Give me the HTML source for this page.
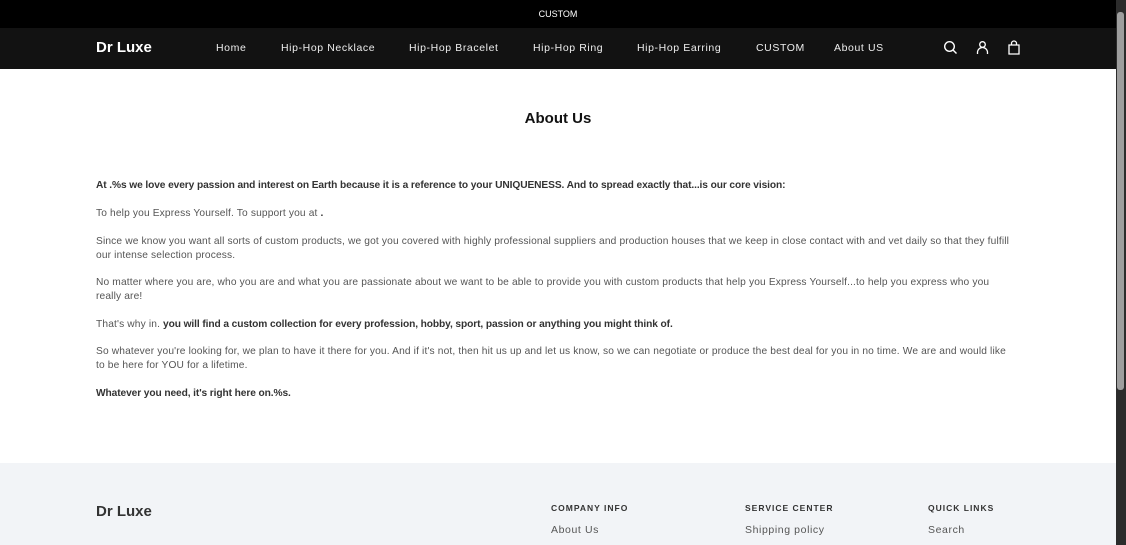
<!DOCTYPE html>
<html><head><meta charset="utf-8"><style>
*{margin:0;padding:0;box-sizing:border-box}
body{width:1126px;height:545px;overflow:hidden;font-family:"Liberation Sans",sans-serif;background:#fff;position:relative}
.sb{position:absolute;right:0;top:0;width:10px;height:545px;background:#2c2c2c}
.sb i{position:absolute;left:1px;top:12px;width:7px;height:378px;background:#9e9e9e;border-radius:3px}
.top{position:absolute;left:0;top:0;width:1116px;height:28px;background:#000;color:#fff;font-size:9px;text-align:center;line-height:28px}
.nav{position:absolute;left:0;top:28px;width:1116px;height:41px;background:#121212;color:#fff}
.logo{position:absolute;left:96px;top:11px;font-size:15px;font-weight:bold}
.nav a{position:absolute;top:14px;font-size:10.5px;letter-spacing:.6px;color:#eee}
.ic{position:absolute;top:12px}
h1{position:absolute;top:110px;width:1116px;text-align:center;font-size:15px;font-weight:bold;color:#111}
.c{position:absolute;left:96px;width:920px;font-size:10.2px;color:#555;line-height:14px;letter-spacing:.15px}
.c b{color:#333;letter-spacing:-.1px}
.foot{position:absolute;left:0;top:463px;width:1116px;height:82px;background:#f2f4f7}
.fl{position:absolute;left:96px;top:40px;font-size:15px;font-weight:bold;color:#333}
.fh{position:absolute;top:40px;font-size:8.5px;font-weight:bold;letter-spacing:1px;color:#333}
.fa{position:absolute;top:61px;font-size:10.5px;letter-spacing:.6px;color:#555}
</style></head><body>
<div class="top">CUSTOM</div>
<div class="nav">
<div class="logo">Dr Luxe</div>
<a style="left:216px">Home</a>
<a style="left:281px">Hip-Hop Necklace</a>
<a style="left:409px">Hip-Hop Bracelet</a>
<a style="left:533px">Hip-Hop Ring</a>
<a style="left:637px">Hip-Hop Earring</a>
<a style="left:756px">CUSTOM</a>
<a style="left:834px">About US</a>
<svg class="ic" style="left:943px" width="15" height="15" viewBox="0 0 15 15" fill="none" stroke="#fff" stroke-width="1.4"><circle cx="6.5" cy="6.5" r="4.8"/><path d="M10 10l3.5 3.5"/></svg>
<svg class="ic" style="left:975px" width="15" height="15" viewBox="0 0 15 15" fill="none" stroke="#fff" stroke-width="1.3"><circle cx="7.5" cy="4.5" r="2.8"/><path d="M2.5 14v-1.5a5 5 0 0 1 10 0V14"/></svg>
<svg class="ic" style="left:1007px" width="14" height="15" viewBox="0 0 14 15" fill="none" stroke="#fff" stroke-width="1.3"><path d="M2 5h10v9H2z"/><path d="M4.5 5V3.5a2.5 2.5 0 0 1 5 0V5"/></svg>
</div>
<h1>About Us</h1>
<div class="c" style="top:179px"><b>At .%s we love every passion and interest on Earth because it is a reference to your UNIQUENESS. And to spread exactly that...is our core vision:</b></div>
<div class="c" style="top:207px">To help you Express Yourself. To support you at <b>.</b></div>
<div class="c" style="top:235px">Since we know you want all sorts of custom products, we got you covered with highly professional suppliers and production houses that we keep in close contact with and vet daily so that they fulfill our intense selection process.</div>
<div class="c" style="top:276px">No matter where you are, who you are and what you are passionate about we want to be able to provide you with custom products that help you Express Yourself...to help you express who you really are!</div>
<div class="c" style="top:318px">That's why in. <b>you will find a custom collection for every profession, hobby, sport, passion or anything you might think of.</b></div>
<div class="c" style="top:345px">So whatever you're looking for, we plan to have it there for you. And if it's not, then hit us up and let us know, so we can negotiate or produce the best deal for you in no time. We are and would like to be here for YOU for a lifetime.</div>
<div class="c" style="top:387px"><b>Whatever you need, it's right here on.%s.</b></div>
<div class="foot">
<div class="fl">Dr Luxe</div>
<div class="fh" style="left:551px">COMPANY INFO</div>
<div class="fh" style="left:745px">SERVICE CENTER</div>
<div class="fh" style="left:928px">QUICK LINKS</div>
<div class="fa" style="left:551px">About Us</div>
<div class="fa" style="left:745px">Shipping policy</div>
<div class="fa" style="left:928px">Search</div>
</div>
<div class="sb"><i></i></div>
</body></html>
